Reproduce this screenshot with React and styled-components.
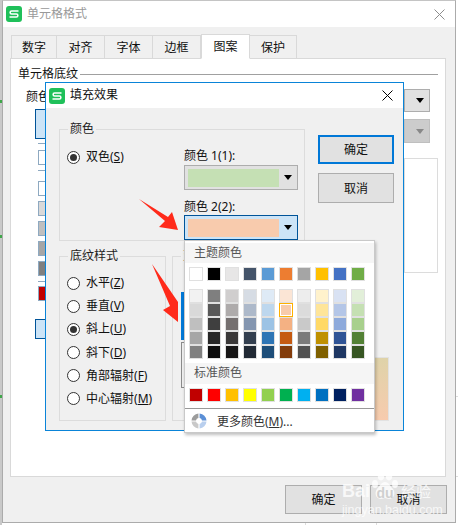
import React from 'react';
import styled, { createGlobalStyle } from 'styled-components';

const GlobalStyle = createGlobalStyle`
  html, body { margin: 0; padding: 0; background: #fff; }
  * { box-sizing: border-box; }
  body { font-family: "Noto Sans", "Noto Sans CJK SC", sans-serif; font-size: 12px; color: #111; }
  u { text-underline-offset: 1px; }
`;

const Page = styled.div`
  position: relative;
  width: 458px;
  height: 525px;
  overflow: hidden;
  padding-left: 2px;
  background:
    linear-gradient(#3fa64a, #3fa64a) 0 100px / 2px 3px no-repeat,
    linear-gradient(#3fa64a, #3fa64a) 0 235px / 2px 3px no-repeat,
    linear-gradient(#3fa64a, #3fa64a) 0 395px / 2px 3px no-repeat,
    linear-gradient(#c9c9c9, #c9c9c9) 0 0 / 2px 100% no-repeat,
    linear-gradient(#dcdcdc, #dcdcdc) 305px 522px / 1px 3px no-repeat,
    linear-gradient(#dcdcdc, #dcdcdc) 376px 522px / 1px 3px no-repeat,
    linear-gradient(#dcdcdc, #dcdcdc) 456px 396px / 2px 1px no-repeat,
    linear-gradient(#dcdcdc, #dcdcdc) 456px 476px / 2px 1px no-repeat,
    #fff;
`;

const OuterDialog = styled.div`
  width: 454px;
  height: 523px;
  display: flex;
  flex-direction: column;
  background: #f0f0f0;
  border: 1px solid #ababab;
  border-top-color: #c4c4c4;
`;

const TitleBar = styled.div`
  height: ${(p) => p.$h}px;
  flex: none;
  display: flex;
  align-items: center;
  gap: 5px;
  padding: 0 10px 0 3px;
  background: #fff;
  color: ${(p) => p.$color};
`;

const TitleText = styled.span`
  flex: 1;
  line-height: 14px;
  padding-bottom: 1px;
`;

const TabBar = styled.div`
  display: flex;
  align-items: flex-end;
  height: 25px;
  margin: 7px 0 -1px 8px;
  position: relative;
  z-index: 1;
`;

const Tab = styled.div`
  width: ${(p) => p.$w}px;
  height: ${(p) => (p.$active ? 25 : 24)}px;
  display: flex;
  align-items: center;
  justify-content: center;
  padding-bottom: 1px;
  background: ${(p) => (p.$active ? '#fff' : '#f0f0f0')};
  border: 1px solid #d9d9d9;
  border-left-width: ${(p) => (p.$first || p.$active ? 1 : 0)}px;
  border-bottom-color: ${(p) => (p.$active ? '#fff' : '#d9d9d9')};
`;

const Panel = styled.div`
  height: 419px;
  margin: 0 9px 0 7px;
  flex: none;
  display: flex;
  flex-direction: column;
  background: #fff;
  border: 1px solid #d9d9d9;
  padding: 7px 7px 0;
`;

const SectionHead = styled.div`
  display: flex;
  align-items: center;
  gap: 2px;
  height: 15px;
  line-height: 14px;
`;

const SectionLine = styled.div`
  flex: 1;
  height: 1px;
  margin-top: 1px;
  background: #a0a0a0;
`;

const PanelBody = styled.div`
  display: flex;
  justify-content: space-between;
`;

const ColorCol = styled.div`
  display: flex;
  flex-direction: column;
  padding-left: 8px;
`;

const ColorLabel = styled.div`
  margin-top: 9px;
  line-height: 14px;
`;

const NoColorBtn = styled.div`
  width: 40px;
  height: ${(p) => p.$h}px;
  margin: ${(p) => p.$mt}px 0 0 9px;
  background: #cce4f7;
  border: 1px solid #005499;
`;

const ChipLine = styled.div`
  width: 20px;
  height: 1px;
  margin: ${(p) => p.$mt}px 0 0 12px;
  background: #8ea9c1;
`;

const Chip = styled.div`
  width: 40px;
  height: 15px;
  margin: ${(p) => p.$mt}px 0 0 12px;
  background: ${(p) => p.$color};
  border: 1px solid #8ea9c1;
`;

const SideCol = styled.div`
  width: 34px;
  display: flex;
  flex-direction: column;
`;

const SideSelect = styled.div`
  width: 26px;
  height: ${(p) => p.$h}px;
  margin-top: ${(p) => p.$mt}px;
  display: flex;
  align-items: center;
  justify-content: flex-end;
  padding-right: 5px;
  background: ${(p) => (p.$off ? '#cccccc' : '#e1e1e1')};
  border: 1px solid ${(p) => (p.$off ? '#bfbfbf' : '#adadad')};
`;

const SideBox = styled.div`
  height: 115px;
  margin-top: 15px;
  border: 1px solid #dcdcdc;
`;

const Caret = styled.span`
  width: 0;
  height: 0;
  border-left: 4px solid transparent;
  border-right: 4px solid transparent;
  border-top: 5px solid ${(p) => (p.$off ? '#888' : '#000')};
`;

const Footer = styled.div`
  display: flex;
  justify-content: flex-end;
  gap: 8px;
  padding: 8px 8px 0 0;
`;

const Button = styled.div`
  width: ${(p) => p.$w}px;
  height: ${(p) => p.$h}px;
  display: flex;
  align-items: center;
  justify-content: center;
  padding-bottom: 1px;
  background: #e1e1e1;
  border: ${(p) => (p.$focus ? '2px solid #0078d7' : '1px solid #adadad')};
`;

const InnerDialog = styled.div`
  position: absolute;
  left: 45px;
  top: 82px;
  width: 359px;
  height: 349px;
  background: #f0f0f0;
  border: 1px solid #0a84d8;
  z-index: 2;
`;

const InnerBody = styled.div`
  padding: 14px 0 0 13px;
  display: flex;
  flex-direction: column;
  gap: 8px;
`;

const TopRow = styled.div`
  display: flex;
`;

const BottomRow = styled.div`
  display: flex;
  gap: 6px;
`;

const Group = styled.fieldset`
  margin: 0;
  padding: 0;
  min-width: 0;
  width: ${(p) => p.$w}px;
  border: 1px solid #dcdcdc;
  flex: none;
`;

const Legend = styled.legend`
  margin-left: 8px;
  padding: 0 2px;
  line-height: 14px;
  color: #222;
`;

const TwoTone = styled.div`
  display: flex;
  justify-content: space-between;
  padding: 12px 6px 0 7px;
`;

const RadioRow = styled.div`
  display: flex;
  align-items: center;
  gap: 6px;
  height: 14px;
  margin-top: ${(p) => p.$mt || 0}px;
  line-height: 14px;
  white-space: nowrap;
`;

const RadioDot = styled.span`
  width: 13px;
  height: 13px;
  flex: none;
  border-radius: 50%;
  background: #fff;
  border: 1px solid #333;
  display: flex;
  align-items: center;
  justify-content: center;
  &::after {
    content: '';
    width: 7px;
    height: 7px;
    border-radius: 50%;
    background: ${(p) => (p.$on ? '#333' : 'transparent')};
  }
`;

const PickCol = styled.div`
  width: 114px;
`;

const PickLabel = styled.div`
  height: 14px;
  line-height: 14px;
  padding-top: 1px;
  margin-top: ${(p) => p.$mt}px;
`;

const Picker = styled.div`
  height: 25px;
  margin-top: ${(p) => p.$mt}px;
  display: flex;
  align-items: center;
  padding: 0 5px 0 3px;
  background: ${(p) => (p.$open ? '#cce4f7' : '#e1e1e1')};
  border: 1px solid ${(p) => (p.$open ? '#005499' : '#adadad')};
`;

const PickerFill = styled.div`
  width: 91px;
  height: 18px;
  margin-right: auto;
  background: ${(p) => p.$color};
`;

const ButtonCol = styled.div`
  display: flex;
  flex-direction: column;
  gap: 9px;
  margin: 13px 0 0 13px;
`;

const PatternList = styled.div`
  display: flex;
  flex-direction: column;
  gap: 9.2px;
  padding: 13px 0 9px 7px;
`;

const VariantGrid = styled.div`
  display: grid;
  grid-template-columns: 70px 70px;
  gap: 2px;
  padding: 29px 0 0 8px;
`;

const Variant = styled.div`
  height: ${(p) => p.$h}px;
  background: ${(p) => (p.$on ? '#0078d7' : '#f0f0f0')};
  border: 1px solid ${(p) => (p.$on ? '#0078d7' : '#8a8a8a')};
`;

const Sample = styled.div`
  width: 38px;
  height: 64px;
  margin-top: 108px;
  border: 1px solid #e2e2e2;
  background: linear-gradient(180deg, #dfd3a9, #f7cbae);
`;

const Menu = styled.div`
  position: absolute;
  left: 184px;
  top: 240px;
  width: 191px;
  height: 193px;
  z-index: 4;
  background: #fff;
  border: 1px solid #c9c9c9;
  box-shadow: 1px 2px 3px rgba(0, 0, 0, 0.25);
  padding-top: 1px;
`;

const MenuHead = styled.div`
  height: ${(p) => p.$h}px;
  margin-top: ${(p) => p.$mt}px;
  display: flex;
  align-items: center;
  padding: 0 0 1px 9px;
  background: #f5f5f5;
  color: #555;
  line-height: 14px;
`;

const SwatchRow = styled.div`
  display: grid;
  grid-template-columns: repeat(10, 14px);
  column-gap: 4px;
  margin-top: ${(p) => p.$mt}px;
  padding-left: 4px;
`;

const Swatch = styled.div`
  height: 14px;
  background: ${(p) => p.$color};
  border: 1px solid ${(p) => (p.$on ? '#ffb000' : '#e0e0e0')};
  box-shadow: ${(p) => (p.$on ? 'inset 0 0 0 1px #fff' : 'none')};
`;

const MenuSep = styled.div`
  height: 1px;
  margin-top: 6px;
  background: #999;
`;

const MoreRow = styled.div`
  height: 25px;
  display: flex;
  align-items: center;
  gap: 10px;
  padding: 0 0 1px 6px;
  color: #333;
`;

const Overlay = styled.svg`
  position: absolute;
  left: 0;
  top: 0;
  z-index: 3;
  pointer-events: none;
`;

const Watermark = styled.div`
  position: absolute;
  left: 342px;
  top: 471px;
  width: 92px;
  z-index: 5;
  color: rgba(255, 255, 255, 0.78);
  font-family: "Liberation Sans", sans-serif;
`;

const MarkTop = styled.div`
  display: flex;
  align-items: flex-end;
  height: 30px;
  font-size: 18px;
  font-weight: 700;
  line-height: 20px;
`;

const PawWrap = styled.span`
  position: relative;
  width: 30px;
  height: 30px;
  flex: none;
  display: flex;
  align-items: flex-end;
  justify-content: center;
  font-size: 14px;
  line-height: 15px;
`;

const PawIcon = styled.svg`
  position: absolute;
  left: 0;
  top: 0;
`;

const PawText = styled.span`
  position: relative;
  color: rgba(205, 205, 205, 0.95);
`;

const MarkCn = styled.span`
  font-family: "Noto Sans CJK SC", sans-serif;
  font-size: 15px;
  font-weight: 400;
  margin-left: 1px;
`;

const MarkUrl = styled.div`
  margin-top: 2px;
  font-size: 12.5px;
  line-height: 14px;
  white-space: nowrap;
`;

const AppIcon = () => (
  <svg width="16" height="16" viewBox="0 0 16 16">
    <rect width="16" height="16" rx="3" fill="#1fc05a" />
    <path d="M12.5 5H5.6a1.5 1.5 0 0 0 0 3h4.8a1.5 1.5 0 0 1 0 3H3.5" fill="none" stroke="#fff" strokeWidth="1.5" />
  </svg>
);

const CloseIcon = ({ color }) => (
  <svg width="11" height="11" viewBox="0 0 11 11">
    <path d="M.5.5l10 10M10.5.5l-10 10" stroke={color} strokeWidth="1" />
  </svg>
);

const WheelIcon = () => (
  <svg width="16" height="16" viewBox="0 0 16 16">
    <path d="M7.4 0.5A7.5 7.5 0 0 0 0.5 7.4H5A3 3 0 0 1 7.4 5Z" fill="#9c9c9c" />
    <path d="M8.6 0.5A7.5 7.5 0 0 1 15.5 7.4H11A3 3 0 0 0 8.6 5Z" fill="#5b8fd6" />
    <path d="M0.5 8.6A7.5 7.5 0 0 0 7.4 15.5V11A3 3 0 0 1 5 8.6Z" fill="#c9c9c9" />
    <path d="M15.5 8.6A7.5 7.5 0 0 1 8.6 15.5V11A3 3 0 0 0 11 8.6Z" fill="#b9cfee" />
  </svg>
);

const tabs = [
  { label: '数字', w: 46 },
  { label: '对齐', w: 48 },
  { label: '字体', w: 48 },
  { label: '边框', w: 48 },
  { label: '图案', w: 49, active: true },
  { label: '保护', w: 47 },
];

const chips = [
  { color: '#fff', mt: 6 },
  { color: '#fff', mt: 10 },
  { color: '#d9d9d9', mt: 5 },
  { color: '#bfbfbf', mt: 5 },
  { color: '#a6a6a6', mt: 5 },
  { color: '#808080', mt: 5 },
];

const patterns = [
  { name: '水平', key: 'Z' },
  { name: '垂直', key: 'V' },
  { name: '斜上', key: 'U', on: true },
  { name: '斜下', key: 'D' },
  { name: '角部辐射', key: 'F' },
  { name: '中心辐射', key: 'M' },
];

const themeColors = ['#ffffff', '#000000', '#e7e6e6', '#44546a', '#5b9bd5', '#ed7d31', '#a5a5a5', '#ffc000', '#4472c4', '#70ad47'];

// one line per row of the shade table
const shades = [
  ['#f2f2f2', '#7f7f7f', '#d0cece', '#d6dce4', '#deeaf6', '#fbe5d5', '#ededed', '#fff2cc', '#d9e2f3', '#e2efd9'],
  ['#d9d9d9', '#595959', '#aeabab', '#adb9ca', '#bdd7ee', '#f7cbac', '#dbdbdb', '#fee599', '#b4c6e7', '#c5e0b3'],
  ['#bfbfbf', '#3f3f3f', '#757070', '#8496b0', '#9cc3e5', '#f4b183', '#c9c9c9', '#ffd966', '#8eaadb', '#a8d08d'],
  ['#a6a6a6', '#262626', '#3a3838', '#333f4f', '#2e75b5', '#c55a11', '#7b7b7b', '#bf9000', '#2f5496', '#538135'],
  ['#808080', '#0d0d0d', '#171616', '#222a35', '#1e4e79', '#833c0b', '#525252', '#7f6000', '#1f3864', '#375623'],
];

const standardColors = ['#c00000', '#ff0000', '#ffc000', '#ffff00', '#92d050', '#00b050', '#00b0f0', '#0070c0', '#002060', '#7030a0'];

export default function App() {
  return (
    <Page>
      <GlobalStyle />
      <OuterDialog>
        <TitleBar $h={26} $color="#999">
          <AppIcon />
          <TitleText>单元格格式</TitleText>
          <CloseIcon color="#8c8c8c" />
        </TitleBar>
        <TabBar>
          {tabs.map((t, i) => (
            <Tab key={t.label} $w={t.w} $active={t.active} $first={i === 0}>{t.label}</Tab>
          ))}
        </TabBar>
        <Panel>
          <SectionHead>单元格底纹<SectionLine /></SectionHead>
          <PanelBody>
            <ColorCol>
              <ColorLabel>颜色</ColorLabel>
              <NoColorBtn $h={30} $mt={5} />
              <ChipLine $mt={4} />
              {chips.map((c, i) => (
                <React.Fragment key={i}>
                  <Chip $color={c.color} $mt={c.mt} />
                  {i === 0 && <ChipLine $mt={5} />}
                </React.Fragment>
              ))}
              <ChipLine $mt={5} />
              <Chip $color="#c00000" $mt={4} />
              <NoColorBtn $h={20} $mt={18} />
            </ColorCol>
            <SideCol>
              <SideSelect $h={23} $mt={8}><Caret /></SideSelect>
              <SideSelect $h={24} $mt={7} $off><Caret $off /></SideSelect>
              <SideBox />
            </SideCol>
          </PanelBody>
        </Panel>
        <Footer>
          <Button $w={77} $h={29}>确定</Button>
          <Button $w={77} $h={29}>取消</Button>
        </Footer>
      </OuterDialog>

      <InnerDialog>
        <TitleBar $h={25} $color="#111">
          <AppIcon />
          <TitleText>填充效果</TitleText>
          <CloseIcon color="#000" />
        </TitleBar>
        <InnerBody>
          <TopRow>
            <Group $w={246}>
              <Legend>颜色</Legend>
              <TwoTone>
                <RadioRow $mt={2}>
                  <RadioDot $on />
                  <span>双色(<u>S</u>)</span>
                </RadioRow>
                <PickCol>
                  <PickLabel $mt={0}>颜色 1(1):</PickLabel>
                  <Picker $mt={3}><PickerFill $color="#c5e0b4" /><Caret /></Picker>
                  <PickLabel $mt={9}>颜色 2(2):</PickLabel>
                  <Picker $mt={2} $open><PickerFill $color="#f8cbad" /><Caret /></Picker>
                </PickCol>
              </TwoTone>
            </Group>
            <ButtonCol>
              <Button $w={76} $h={29} $focus>确定</Button>
              <Button $w={76} $h={30}>取消</Button>
            </ButtonCol>
          </TopRow>
          <BottomRow>
            <Group $w={107}>
              <Legend>底纹样式</Legend>
              <PatternList>
                {patterns.map((p) => (
                  <RadioRow key={p.key}>
                    <RadioDot $on={p.on} />
                    <span>{p.name}(<u>{p.key}</u>)</span>
                  </RadioRow>
                ))}
              </PatternList>
            </Group>
            <Group $w={173}>
              <Legend>变形</Legend>
              <VariantGrid>
                <Variant $h={48} $on />
                <Variant $h={48} />
                <Variant $h={46} />
                <Variant $h={46} />
              </VariantGrid>
            </Group>
            <Sample />
          </BottomRow>
        </InnerBody>
      </InnerDialog>

      <Overlay width="458" height="525" viewBox="0 0 458 525">
        <polygon points="139,199 168,217 172,212 178,230 159,227 165,221" fill="#ff2a1a" />
        <polygon points="152,264 178,302 178,322 163,310 170,306" fill="#ff2a1a" />
      </Overlay>

      <Menu>
        <MenuHead $h={20} $mt={1}>主题颜色</MenuHead>
        <SwatchRow $mt={4}>
          {themeColors.map((c) => <Swatch key={c} $color={c} />)}
        </SwatchRow>
        <SwatchRow $mt={8}>
          {shades.flat().map((c, i) => <Swatch key={i} $color={c} $on={i === 15} />)}
        </SwatchRow>
        <MenuHead $h={21} $mt={4}>标准颜色</MenuHead>
        <SwatchRow $mt={4}>
          {standardColors.map((c, i) => <Swatch key={i} $color={c} />)}
        </SwatchRow>
        <MenuSep />
        <MoreRow>
          <WheelIcon />
          <span>更多颜色(<u>M</u>)...</span>
        </MoreRow>
      </Menu>

      <Watermark>
        <MarkTop>
          Bai
          <PawWrap>
            <PawIcon width="30" height="30" viewBox="0 0 30 30" fill="rgba(255,255,255,0.78)">
              <ellipse cx="5" cy="13" rx="3" ry="4" />
              <ellipse cx="11" cy="5" rx="3.2" ry="4.4" />
              <ellipse cx="19" cy="5" rx="3.2" ry="4.4" />
              <ellipse cx="25" cy="13" rx="3" ry="4" />
              <path d="M15 11c4 0 5 4 8 7 3 4 1 10-4 10-2 0-3-1-4-1s-2 1-4 1c-5 0-7-6-4-10 3-3 4-7 8-7z" />
            </PawIcon>
            <PawText>du</PawText>
          </PawWrap>
          <MarkCn>经验</MarkCn>
        </MarkTop>
        <MarkUrl>jingyan.baidu.com</MarkUrl>
      </Watermark>
    </Page>
  );
}
